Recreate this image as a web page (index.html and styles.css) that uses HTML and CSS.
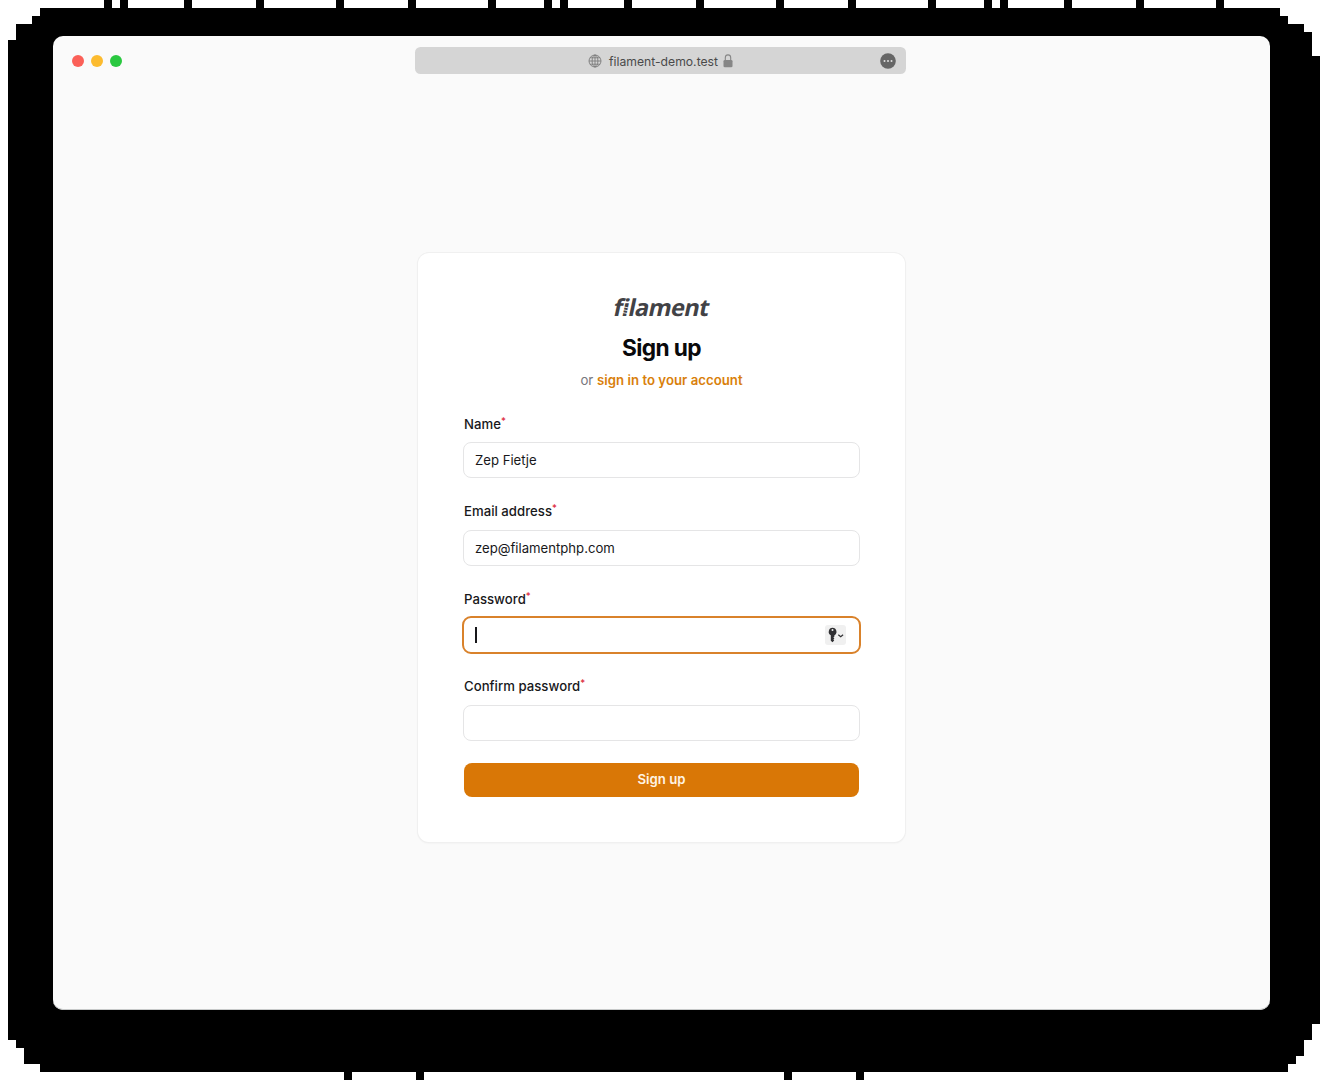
FILE: index.html
```html
<!DOCTYPE html>
<html lang="en">
<head>
<meta charset="utf-8">
<title>Sign up</title>
<link rel="stylesheet" href="styles.css">
</head>
<body>
<svg class="backdrop" viewBox="0 0 1323 1080" shape-rendering="crispEdges" aria-hidden="true">
  <path d="M40 8H1280V16H1288V24H1304V32H1312V56H1320V1024H1312V1040H1304V1056H1296V1064H1288V1072H40V1064H24V1048H16V1040H8V40H16V24H32V16H40Z"/>
  <path d="M104 0h8v8h-8zM120 0h8v8h-8zM184 0h8v8h-8zM256 0h8v8h-8zM336 0h8v8h-8zM408 0h8v8h-8zM488 0h8v8h-8zM544 0h8v8h-8zM560 0h8v8h-8zM624 0h8v8h-8zM696 0h8v8h-8zM776 0h8v8h-8zM848 0h8v8h-8zM928 0h8v8h-8zM984 0h8v8h-8zM1000 0h8v8h-8zM1064 0h8v8h-8zM1136 0h8v8h-8zM1216 0h8v8h-8zM344 1072h8v8h-8zM416 1072h8v8h-8zM784 1072h8v8h-8zM856 1072h8v8h-8z"/>
</svg>
<div class="window">
  <header class="toolbar">
    <div class="lights"><span class="light red"></span><span class="light yellow"></span><span class="light green"></span></div>
    <div class="address">
      <svg class="globe" viewBox="0 0 14 14" aria-hidden="true"><circle cx="7" cy="7" r="6"/><ellipse cx="7" cy="7" rx="2.9" ry="6"/><path d="M7 1v12M1 7h12M2 3.8h10M2 10.2h10"/></svg>
      <span class="host">filament-demo.test</span>
      <svg class="lock" viewBox="0 0 10 14" aria-hidden="true"><rect x=".5" y="6" width="9" height="7.3" rx="1.3"/><path d="M2.3 6.5V3.8a2.7 2.9 0 0 1 5.4 0v2.7"/></svg>
      <svg class="more" viewBox="0 0 16 16" aria-hidden="true"><circle cx="8" cy="8" r="7.8"/><path d="M4.5 8h.01M8 8h.01M11.5 8h.01"/></svg>
    </div>
  </header>
  <main class="card">
    <div class="logo">f<span class="filament-i">i<svg class="coil" viewBox="0 0 6 20" aria-hidden="true"><path d="M0 8.8l6 1.2M0 11.6l6 1.2M0 14.4l6 1.2"/></svg></span>lament</div>
    <h1 class="title">Sign up</h1>
    <p class="subtitle">or <a class="link">sign in to your account</a></p>
    <form class="form">
      <div class="field"><label class="label">Name<span class="star">*</span></label><div class="input">Zep Fietje</div></div>
      <div class="field"><label class="label">Email address<span class="star">*</span></label><div class="input">zep@filamentphp.com</div></div>
      <div class="field"><label class="label">Password<span class="star">*</span></label>
        <div class="input focused"><span class="caret"></span>
          <svg class="key" viewBox="0 0 21 20" aria-hidden="true"><rect class="key-bg" width="21" height="20" rx="3"/><path class="key-shape" fill-rule="evenodd" d="M7.5 2.8a4 4 0 0 1 1.9 7.5v1.3l-1 1 1 1-1 1 .8.8-1.7 1.8-1.7-1.5v-5.4A4 4 0 0 1 7.5 2.8zm0 1.3a1 1 0 1 0 0 2 1 1 0 0 0 0-2z"/><path class="chevron" d="M13.3 9.7l2.4 2 2.4-2"/></svg>
        </div></div>
      <div class="field"><label class="label">Confirm password<span class="star">*</span></label><div class="input"></div></div>
      <button class="submit" type="button">Sign up</button>
    </form>
  </main>
</div>
</body>
</html>
```
FILE: styles.css
```css
* { box-sizing: border-box; }
body {
  margin: 0;
  height: 1080px;
  padding: 36px 53px 0;
  overflow: hidden;
  background: #fff;
  font-family: Inter, sans-serif;
  font-size: 13.15px;
  color: #18181b;
}
.backdrop { position: absolute; left: 0; top: 0; width: 1323px; height: 1080px; z-index: -1; }
.window {
  height: 974px;
  border-radius: 10px;
  background: #fafafa;
  box-shadow: inset 0 -1px #c7c9c9;
}
.toolbar {
  height: 49px;
  display: grid;
  grid-template-columns: 362px 491px 1fr;
  align-items: center;
}
.lights { display: flex; gap: 7px; padding-left: 19px; }
.light { width: 12px; height: 12px; border-radius: 50%; }
.red { background: #fb6058; }
.yellow { background: #fcbb2f; }
.green { background: #2ac840; }
.address {
  position: relative;
  height: 27px;
  display: flex;
  align-items: center;
  justify-content: center;
  border-radius: 5.5px;
  background: #d5d5d5;
  color: #4a4a4a;
  font-size: 12.2px;
}
.host { margin: 0 5px 0 7px; padding-top: 2px; line-height: 16px; }
.globe { width: 14px; height: 14px; fill: none; stroke: #777; stroke-width: .85; }
.lock { width: 10px; height: 14px; margin-top: 1px; fill: #868686; }
.lock path { fill: none; stroke: #868686; stroke-width: 1.1; }
.more { position: absolute; right: 10px; top: 5.5px; width: 16px; height: 16px; fill: #666; }
.more path { stroke: #dcdcdc; stroke-width: 2; stroke-linecap: round; }
.card {
  width: 487px;
  height: 589px;
  margin: 168px 0 0 365px;
  padding: 41px 45px 0;
  border-radius: 11px;
  background: #fff;
  box-shadow: 0 0 0 1px #f0f0f0, 0 1px 2px #e6e6e6;
}
.logo {
  width: max-content;
  margin: 0 auto;
  height: 27px;
  font: 700 23.5px/27px "Open Sans", sans-serif;
  letter-spacing: -.65px;
  font-variant-ligatures: none;
  color: #424246;
  transform: skewX(-12deg);
}
.filament-i { position: relative; }
.coil { position: absolute; left: 1px; top: 7px; width: 6px; height: 20px; }
.coil path { stroke: #fff; stroke-width: .8; }
.title {
  margin: 12px 0 0;
  text-align: center;
  font-size: 22.7px;
  line-height: 30px;
  font-weight: 700;
  letter-spacing: -.6px;
  color: #09090b;
}
.subtitle { margin: 6px 0 0; text-align: center; line-height: 22px; font-size: 13.2px; letter-spacing: .02px; color: #77777d; }
.link { font-weight: 600; color: #d97f0b; }
.form { padding-top: 22px; }
.field { height: 87.5px; }
.label { display: block; height: 29px; padding: .9px 0 0 1px; line-height: 20px; font-weight: 500; letter-spacing: .03px; }
.star { font-size: 9.5px; line-height: 0; vertical-align: 5px; color: #dc2638; }
.input {
  height: 36px;
  display: flex;
  align-items: center;
  padding: 0 11px;
  border: 1px solid #e5e5e6;
  border-radius: 8px;
  background: #fff;
}
.focused {
  justify-content: space-between;
  height: 38px;
  margin: -1px -1px 0;
  border: 2px solid #d9822b;
  border-radius: 9px;
}
.caret { width: 2px; height: 16px; background: #18181b; }
.key { width: 21px; height: 20px; margin-right: 2px; }
.key-bg { fill: #f0f0f0; }
.key-shape { fill: #303033; }
.chevron { fill: none; stroke: #303033; stroke-width: 1.2; }
.submit {
  display: block;
  width: calc(100% - 2px);
  height: 34px;
  margin: 0 1px;
  padding: 0 0 2px;
  border: 0;
  border-radius: 8px;
  background: #d97706;
  font: 600 13.2px/32px Inter, sans-serif;
  color: #fff4e4;
}
```
